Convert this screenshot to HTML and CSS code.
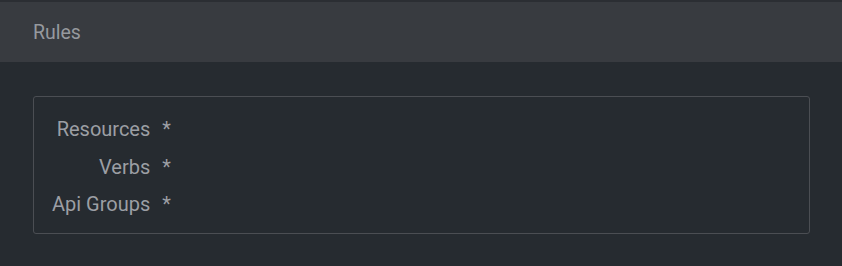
FILE: index.html
```html
<!DOCTYPE html>
<html>
<head>
<meta charset="utf-8">
<link rel="stylesheet" href="styles.css">
</head>
<body>
<div class="panel">
  <div class="header">Rules</div>
  <div class="content">
    <div class="box">
      <div class="grid">
        <div class="label">Resources</div><div class="value">*</div>
        <div class="label">Verbs</div><div class="value">*</div>
        <div class="label">Api Groups</div><div class="value">*</div>
      </div>
    </div>
  </div>
</div>
</body>
</html>
```
FILE: styles.css
```css
html, body {
  margin: 0;
  padding: 0;
  background: #262b30;
}
body {
  font-family: Roboto, "Noto Sans", sans-serif;
  color: #9c9fa4;
  width: 842px;
  height: 266px;
  overflow: hidden;
}
.panel {
  border-top: 2px solid #2b2e33;
}
.header {
  height: 60px;
  background: #383b40;
  box-sizing: border-box;
  padding-left: 33px;
  display: flex;
  align-items: center;
  font-size: 19.5px;
  color: #96999e;
}
.content {
  padding: 34px 32px 0 33px;
}
.box {
  height: 138px;
  box-sizing: border-box;
  border: 1px solid #4b4e53;
  border-radius: 3px;
  padding: 21px 18px;
}
.grid {
  display: grid;
  grid-template-columns: auto auto;
  justify-content: start;
  column-gap: 12px;
  row-gap: 15.5px;
  font-size: 20px;
  line-height: 22px;
}
.label {
  text-align: right;
}
```
